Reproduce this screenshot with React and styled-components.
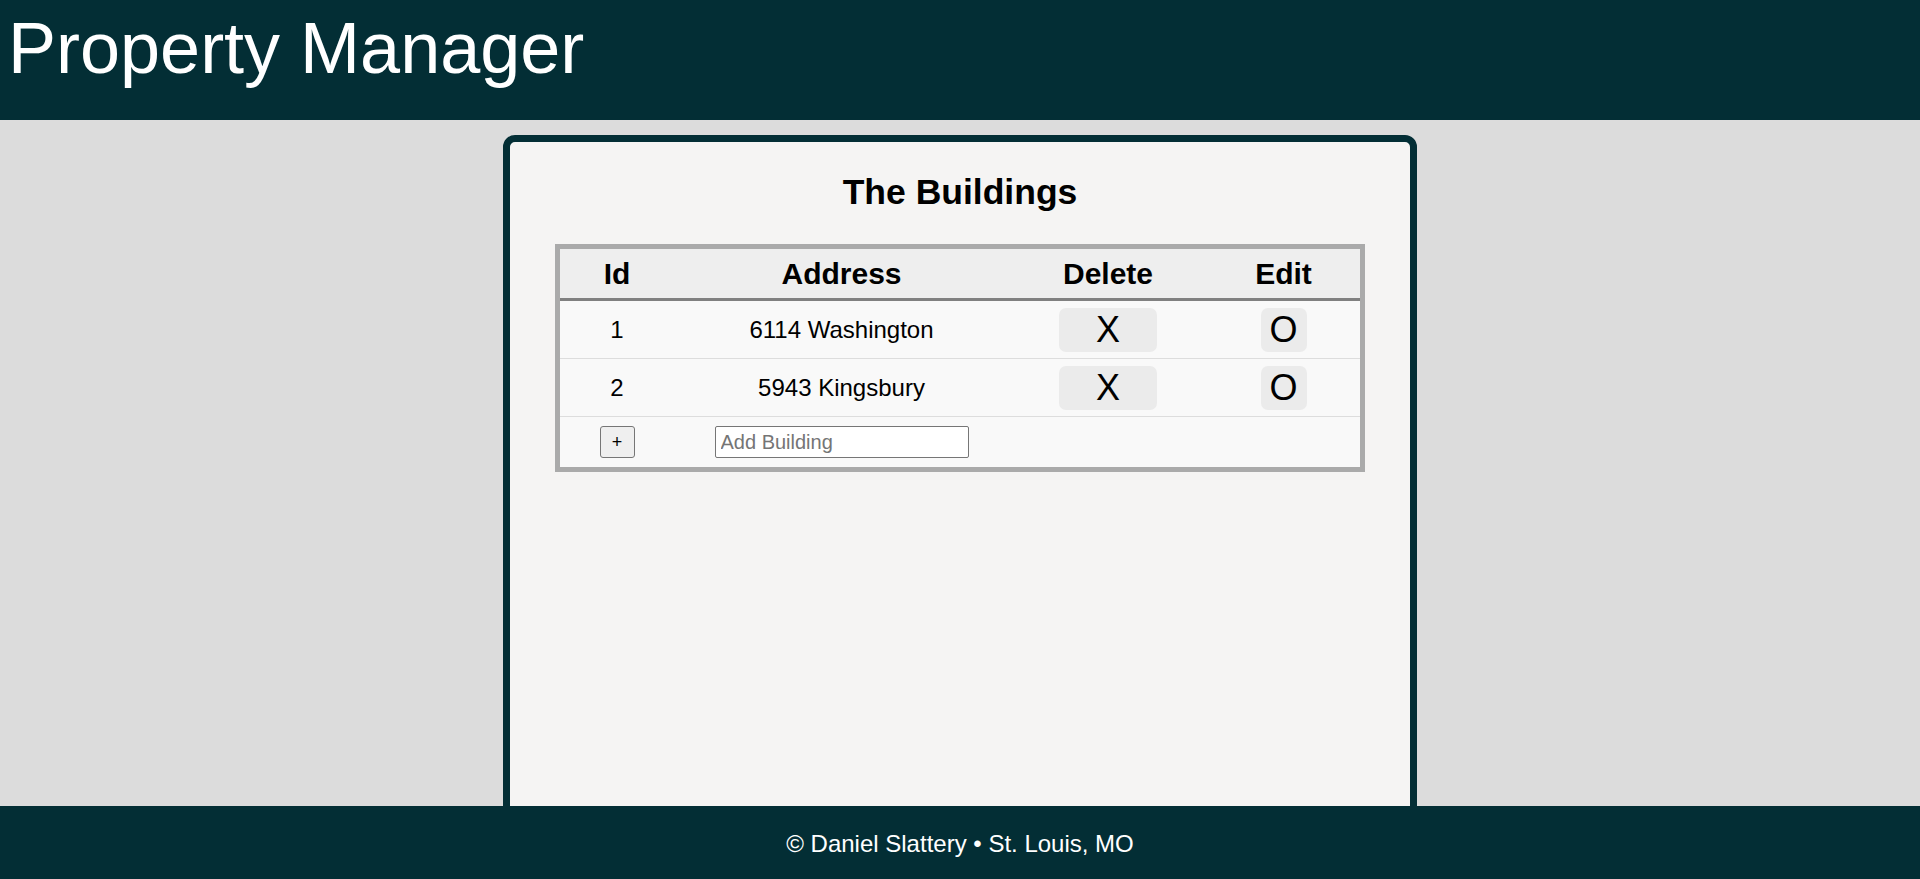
import styled, { createGlobalStyle } from "styled-components"

const GlobalStyle = createGlobalStyle`
    body {
        margin: 0;
        background-color: #dcdcdc;
        font-family: "Liberation Sans", Arial, sans-serif;
    }
`

const Header = styled.header`
    height: 120px;
    box-sizing: border-box;
    background-color: #032e35;
    padding: 7px 0 0 8px;
`
const Brand = styled.h1`
    margin: 0;
    font-size: 72px;
    font-weight: 400;
    color: #fff;
`
const Main = styled.main`
    padding-top: 15px;
`
const Card = styled.div`
    width: 900px;
    height: 700px;
    margin: 0 auto;
    padding-top: 30px;
    box-sizing: content-box;
    border: 7px solid #032e35;
    border-radius: 12px;
    background-color: #f5f4f3;
`
const Title = styled.h2`
    margin: 0 0 31px;
    text-align: center;
    font-size: 35.5px;
    font-weight: 700;
    color: #000;
`
const Table = styled.div`
    width: 800px;
    margin: 0 auto;
    border: 5px solid #aaa;
    background-color: #f9f9f9;
`
const Row = styled.div`
    display: grid;
    grid-template-columns: 114px 335px 198px 153px;
    align-items: center;
    height: ${(p) => p.h}px;
    border-bottom: ${(p) => (p.head ? "3px solid #808080" : p.last ? "none" : "1px solid #ddd")};
    background-color: ${(p) => (p.head ? "#eee" : "transparent")};
`
const HeadCell = styled.div`
    text-align: center;
    font-size: 30px;
    font-weight: 700;
`
const Cell = styled.div`
    display: flex;
    justify-content: center;
    align-items: center;
    font-size: 24px;
`
const ActionButton = styled.button`
    width: ${(p) => p.w}px;
    height: 44px;
    padding: 0;
    border: none;
    border-radius: 7px;
    background-color: #ebebeb;
    font-family: inherit;
    font-size: 36px;
    color: #000;
    cursor: pointer;
`
const AddButton = styled.button`
    width: 35px;
    height: 32px;
    padding: 0;
    border: 1px solid #767676;
    border-radius: 3px;
    background-color: #efefef;
    font-family: inherit;
    font-size: 18px;
    color: #000;
`
const AddInput = styled.input`
    width: 254px;
    height: 32px;
    box-sizing: border-box;
    padding: 0 5px;
    border: 1px solid #767676;
    border-radius: 2px;
    background: #fff;
    font-family: inherit;
    font-size: 20px;
    &::placeholder {
        color: #757575;
    }
`
const Footer = styled.footer`
    position: fixed;
    left: 0;
    right: 0;
    bottom: 0;
    height: 73px;
    box-sizing: border-box;
    padding-top: 2px;
    display: flex;
    align-items: center;
    justify-content: center;
    background-color: #032e35;
    color: #fff;
    font-size: 24px;
`

const buildings = [
    { id: 1, address: "6114 Washington" },
    { id: 2, address: "5943 Kingsbury" },
]

const App = () => {
    return (
        <>
            <GlobalStyle />
            <Header>
                <Brand>Property Manager</Brand>
            </Header>
            <Main>
                <Card>
                    <Title>The Buildings</Title>
                    <Table>
                        <Row head h={49}>
                            <HeadCell>Id</HeadCell>
                            <HeadCell>Address</HeadCell>
                            <HeadCell>Delete</HeadCell>
                            <HeadCell>Edit</HeadCell>
                        </Row>
                        {buildings.map((b) => (
                            <Row key={b.id} h={57}>
                                <Cell>{b.id}</Cell>
                                <Cell>{b.address}</Cell>
                                <Cell><ActionButton w={98}>X</ActionButton></Cell>
                                <Cell><ActionButton w={46}>O</ActionButton></Cell>
                            </Row>
                        ))}
                        <Row last h={50}>
                            <Cell><AddButton>+</AddButton></Cell>
                            <Cell><AddInput placeholder="Add Building" /></Cell>
                            <Cell />
                            <Cell />
                        </Row>
                    </Table>
                </Card>
            </Main>
            <Footer>© Daniel Slattery • St. Louis, MO</Footer>
        </>
    )
}

export default App
